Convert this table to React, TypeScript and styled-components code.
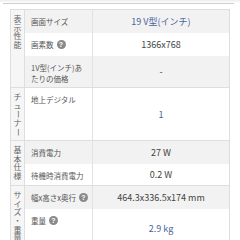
import React from "react";
import styled, { createGlobalStyle } from "styled-components";

const Global = createGlobalStyle`
  html, body { margin: 0; padding: 0; background: #fff; }
  body { font-family: "Noto Sans CJK JP", "Noto Sans", "Liberation Sans", sans-serif; }
`;

const Page = styled.div`
  width: 240px;
  height: 240px;
  overflow: hidden;
  padding-top: 3px;
  box-sizing: border-box;
  background: linear-gradient(#ececec, #ffffff 3px);
`;

const Card = styled.div`
  margin: 0 6px 0 3px;
  border-top: 1px solid #cfcfcf;
  background: #fff;
  padding: 5px 2px 0 7px;
`;

const Table = styled.table`
  width: 220px;
  border-collapse: collapse;
  table-layout: fixed;
  border: 1px solid #dedede;
`;

const Row = styled.tr<{ $h: number; $shade?: boolean }>`
  height: ${(p) => p.$h}px;
  background: ${(p) => (p.$shade ? "#f2f2f2" : "#ffffff")};
`;

const CatCell = styled.td`
  width: 14px;
  padding: 5px 0 0;
  vertical-align: top;
  text-align: center;
  background: #f6f6f6;
  border: 1px solid #dedede;
`;

const CatStack = styled.div`
  display: flex;
  flex-direction: column;
  align-items: center;
`;

const CatChar = styled.span<{ $rot?: boolean }>`
  display: block;
  font-size: 8px;
  line-height: 8.7px;
  height: 8.7px;
  color: #666;
  transform: ${(p) => (p.$rot ? "rotate(90deg)" : "none")};
`;

const LabelCell = styled.td<{ $last?: boolean }>`
  width: 68px;
  padding: 6px 3px 3px 6px;
  vertical-align: top;
  font-size: 7.5px;
  line-height: 11px;
  color: #555;
  border-right: 1px solid #e2e2e2;
  border-bottom: ${(p) => (p.$last ? "1px solid #dedede" : "none")};
`;

const NoWrap = styled.span`
  white-space: nowrap;
`;

const ValueCell = styled.td<{ $blue?: boolean; $last?: boolean }>`
  padding: 0 2px;
  vertical-align: middle;
  text-align: center;
  font-size: 9px;
  line-height: 11px;
  color: ${(p) => (p.$blue ? "#48649a" : "#444")};
  white-space: nowrap;
  border-bottom: ${(p) => (p.$last ? "1px solid #dedede" : "none")};
`;

const Help = styled.span`
  display: inline-block;
  width: 9px;
  height: 9px;
  border-radius: 50%;
  background: #8a8a8a;
  color: #fff;
  font-size: 7px;
  font-weight: bold;
  line-height: 9px;
  text-align: center;
  margin-left: 3px;
  vertical-align: top;
  margin-top: 1px;
  font-family: "Liberation Sans", sans-serif;
`;

function Category({ text, rows }: { text: string; rows?: number }) {
  return (
    <CatCell rowSpan={rows}>
      <CatStack>
        {Array.from(text).map((c, i) => (
          <CatChar key={i} $rot={c === "ー"}>
            {c}
          </CatChar>
        ))}
      </CatStack>
    </CatCell>
  );
}

function HelpLabel({ text }: { text: string }) {
  return (
    <NoWrap>
      {text}
      <Help>?</Help>
    </NoWrap>
  );
}

export default function App() {
  return (
    <Page>
      <Global />
      <Card>
        <Table>
          <colgroup>
            <col style={{ width: 14 }} />
            <col style={{ width: 68 }} />
            <col />
          </colgroup>
          <tbody>
            <Row $h={23} $shade>
              <Category text="表示性能" rows={3} />
              <LabelCell>画面サイズ</LabelCell>
              <ValueCell $blue>19 V型(インチ)</ValueCell>
            </Row>
            <Row $h={23}>
              <LabelCell>
                <HelpLabel text="画素数" />
              </LabelCell>
              <ValueCell>1366x768</ValueCell>
            </Row>
            <Row $h={32} $shade>
              <LabelCell $last>1V型(インチ)あたりの価格</LabelCell>
              <ValueCell $last>-</ValueCell>
            </Row>
            <Row $h={53}>
              <Category text="チューナー" />
              <LabelCell $last>地上デジタル</LabelCell>
              <ValueCell $blue $last>1</ValueCell>
            </Row>
            <Row $h={23} $shade>
              <Category text="基本仕様" rows={2} />
              <LabelCell>消費電力</LabelCell>
              <ValueCell>27 W</ValueCell>
            </Row>
            <Row $h={22}>
              <LabelCell $last>待機時消費電力</LabelCell>
              <ValueCell $last>0.2 W</ValueCell>
            </Row>
            <Row $h={23} $shade>
              <Category text="サイズ・重量" rows={2} />
              <LabelCell>
                <HelpLabel text="幅x高さx奥行" />
              </LabelCell>
              <ValueCell>464.3x336.5x174 mm</ValueCell>
            </Row>
            <Row $h={40}>
              <LabelCell $last>
                <HelpLabel text="重量" />
              </LabelCell>
              <ValueCell $blue $last>2.9 kg</ValueCell>
            </Row>
          </tbody>
        </Table>
      </Card>
    </Page>
  );
}
